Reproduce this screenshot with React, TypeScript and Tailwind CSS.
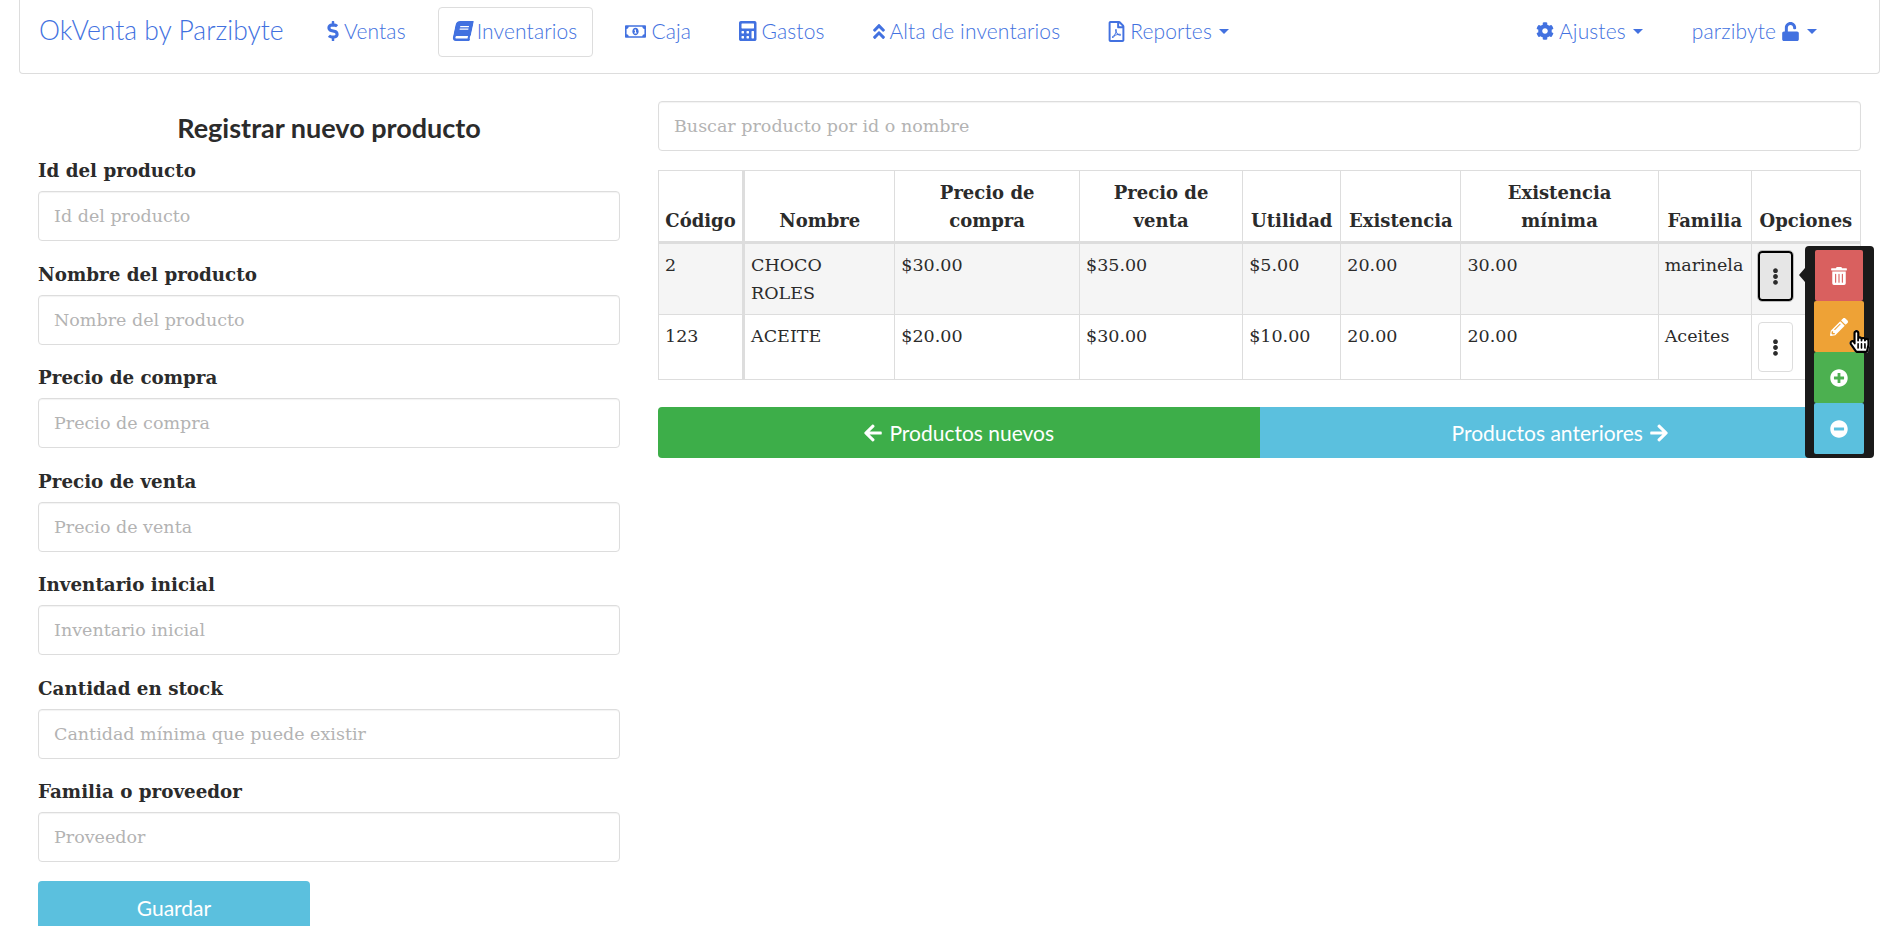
import {
  FaArrowLeft,
  FaArrowRight,
  FaBook,
  FaCalculator,
  FaCog,
  FaDollarSign,
  FaEllipsisV,
  FaAngleDoubleUp,
  FaHandPointer,
  FaMinusCircle,
  FaPencilAlt,
  FaPlusCircle,
  FaRegFilePdf,
  FaRegHandPointer,
  FaRegMoneyBillAlt,
  FaTrashAlt,
  FaUnlock,
} from "react-icons/fa"
import type { ReactNode } from "react"

const Caret = () => (
  <span className="ml-[2px] inline-block border-x-[5px] border-t-[5px] border-x-transparent border-t-[#4271e0]" />
)

const NavItem = ({ icon, label, active, caret }: { icon: ReactNode; label: string; active?: boolean; caret?: boolean }) => (
  <a
    className={`flex h-[50px] items-center gap-[5px] rounded-[4px] border px-[15px] pb-[2px] ${
      active ? "border-[#dddddd]" : "border-transparent"
    }`}
  >
    {icon}
    <span>{label}</span>
    {caret && <Caret />}
  </a>
)

const fields = [
  ["Id del producto", "Id del producto"],
  ["Nombre del producto", "Nombre del producto"],
  ["Precio de compra", "Precio de compra"],
  ["Precio de venta", "Precio de venta"],
  ["Inventario inicial", "Inventario inicial"],
  ["Cantidad en stock", "Cantidad mínima que puede existir"],
  ["Familia o proveedor", "Proveedor"],
]

const columns = [
  { title: "Código", width: "w-[85px]" },
  { title: "Nombre", width: "w-[151px]" },
  { title: "Precio de compra", width: "w-[184.5px]" },
  { title: "Precio de venta", width: "w-[163px]" },
  { title: "Utilidad", width: "w-[98px]" },
  { title: "Existencia", width: "w-[120px]" },
  { title: "Existencia mínima", width: "w-[197px]" },
  { title: "Familia", width: "w-[93px]" },
  { title: "Opciones", width: "w-[109px]" },
]

const rows = [
  ["2", "CHOCO ROLES", "$30.00", "$35.00", "$5.00", "20.00", "30.00", "marinela"],
  ["123", "ACEITE", "$20.00", "$30.00", "$10.00", "20.00", "20.00", "Aceites"],
]

const PopoverButton = ({ color, narrow, children }: { color: string; narrow?: boolean; children: ReactNode }) => (
  <button
    className={`flex h-[51px] items-center justify-center rounded-[2px] text-[18px] text-white ${color} ${
      narrow ? "mx-px w-[48px]" : "w-[50px]"
    }`}
  >
    {children}
  </button>
)

const App = () => {
  return (
    <div className="h-[926px] overflow-hidden bg-white text-[#2b2b2b] [font-family:'DejaVu_Serif',serif]">
      <nav className="ml-[19px] mr-2 flex h-[74px] items-start rounded-b-[4px] border-x border-b border-[#dddddd] pl-[19px] pt-[7px] text-[21px] font-light tracking-[0.12px] text-[#4271e0] [font-family:Lato,sans-serif]">
        <a className="flex h-[50px] w-[272px] items-center pb-[2px] text-[26.5px] tracking-normal">OkVenta by Parzibyte</a>
        <div className="flex gap-[16px]">
          <NavItem icon={<FaDollarSign className="w-[12px] text-[20px]" />} label="Ventas" />
          <NavItem active icon={<FaBook className="w-[18px] -skew-x-12 text-[20px]" />} label="Inventarios" />
          <NavItem icon={<FaRegMoneyBillAlt className="text-[21px]" />} label="Caja" />
          <NavItem icon={<FaCalculator className="w-[17.5px] text-[20px]" />} label="Gastos" />
          <NavItem icon={<FaAngleDoubleUp className="w-[12px] text-[19px]" />} label="Alta de inventarios" />
          <NavItem icon={<FaRegFilePdf className="w-[17px] text-[21px]" />} label="Reportes" caret />
        </div>
        <div className="ml-auto mr-[47px] flex gap-[18px]">
          <NavItem icon={<FaCog className="text-[18px]" />} label="Ajustes" caret />
          <a className="flex h-[50px] items-center gap-[5px] px-[15px] pb-[2px]">
            <span>parzibyte</span>
            <FaUnlock className="text-[19px]" />
            <Caret />
          </a>
        </div>
      </nav>

      <div className="flex gap-[38px] pl-[38px] pt-[27px]">
        <div className="w-[582px] shrink-0">
          <h2 className="mt-[10px] mb-[12px] h-[33px] text-center text-[27px] leading-[33px] font-bold [font-family:Lato,sans-serif]">
            Registrar nuevo producto
          </h2>
          {fields.map(([label, placeholder]) => (
            <div key={label} className="mb-[18.5px]">
              <label className="mb-[7px] block h-[28px] pt-px text-[18.3px] leading-[28px] font-bold">{label}</label>
              <input
                placeholder={placeholder}
                className="h-[50px] w-full rounded-[4px] border border-[#dddddd] px-[15px] text-[17.5px] shadow-[inset_0_1px_1px_rgba(0,0,0,0.05)] placeholder:text-[#b3b3b3]"
              />
            </div>
          ))}
          <button className="h-[54px] w-[272px] rounded-[4px] bg-[#5bc0de] text-[21px] text-white [font-family:Lato,sans-serif]">
            Guardar
          </button>
        </div>

        <div className="relative w-[1203px] shrink-0">
          <input
            placeholder="Buscar producto por id o nombre"
            className="mb-[19px] block h-[50px] w-full rounded-[4px] border border-[#dddddd] px-[15px] text-[17.5px] shadow-[inset_0_1px_1px_rgba(0,0,0,0.05)] placeholder:text-[#b3b3b3]"
          />
          <table className="mb-[27px] w-full table-fixed border-collapse border border-[#dddddd] text-[17.5px] leading-[28px]">
            <thead>
              <tr>
                {columns.map((c, i) => (
                  <th
                    key={c.title}
                    className={`${c.width} border-b-[3px] border-[#dddddd] px-[6px] pb-[6px] pt-[8px] text-center align-bottom text-[18px] font-bold ${
                      i === 0 ? "border-r-[3px]" : "border-r"
                    }`}
                  >
                    {c.title}
                  </th>
                ))}
              </tr>
            </thead>
            <tbody>
              {rows.map((row, r) => (
                <tr key={row[0]} className={r === 0 ? "bg-[#f5f5f5]" : ""}>
                  {row.map((cell, i) => (
                    <td
                      key={i}
                      className={`border-b border-[#dddddd] px-[6px] py-[7px] align-top ${i === 0 ? "border-r-[3px]" : "border-r"}`}
                    >
                      {cell}
                    </td>
                  ))}
                  <td className="border-b border-[#dddddd] px-[6px] py-[7px] align-top">
                    <button
                      className={`flex h-[50px] w-[35px] items-center justify-center rounded-[4px] text-[17px] ${
                        r === 0
                          ? "border-2 border-black bg-[#e6e6e6] outline outline-1 outline-[#bbbbbb]"
                          : "border border-[#dddddd] bg-white"
                      }`}
                    >
                      <FaEllipsisV />
                    </button>
                  </td>
                </tr>
              ))}
            </tbody>
          </table>
          <div className="flex h-[51px] text-[21px] text-white [font-family:Lato,sans-serif]">
            <button className="flex w-1/2 items-center justify-center gap-[6px] rounded-l-[4px] bg-[#3dae49]">
              <FaArrowLeft className="text-[20px]" />
              Productos nuevos
            </button>
            <button className="flex w-1/2 items-center justify-center gap-[6px] bg-[#5bc0de]">
              Productos anteriores
              <FaArrowRight className="text-[20px]" />
            </button>
          </div>

          <div className="absolute left-[1147px] top-[145px] flex w-[69px] flex-col rounded-[4px] bg-[#1a1a1a] px-[9px] pb-[4px] pt-[4px]">
            <span className="absolute -left-[6px] top-[22px] border-y-[7px] border-r-[6px] border-y-transparent border-r-[#1a1a1a]" />
            <PopoverButton color="bg-[#d9605f]" narrow>
              <FaTrashAlt />
            </PopoverButton>
            <PopoverButton color="bg-[#eea236]">
              <FaPencilAlt />
            </PopoverButton>
            <PopoverButton color="bg-[#4cb050]">
              <FaPlusCircle />
            </PopoverButton>
            <PopoverButton color="bg-[#5bc0de]">
              <FaMinusCircle />
            </PopoverButton>
            <span className="absolute left-[43px] top-[84px] text-[23px]">
              <FaHandPointer className="text-white" />
              <FaRegHandPointer className="absolute left-0 top-0 text-black" />
            </span>
          </div>
        </div>
      </div>
    </div>
  )
}

export default App
